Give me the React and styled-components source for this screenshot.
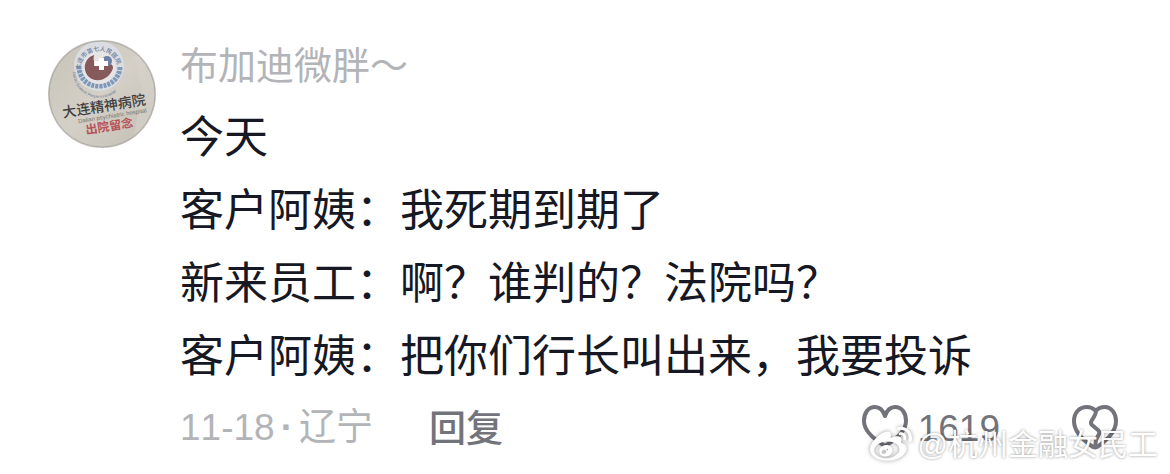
import { createGlobalStyle, styled } from "styled-components";
import { FaWeibo } from "react-icons/fa";

const GlobalStyle = createGlobalStyle`
  body {
    margin: 0;
    background-color: #fff;
    font-family: "Noto Sans CJK SC", sans-serif;
  }
`;
const Wrap = styled.main`
  position: relative;
  box-sizing: border-box;
  padding: 40px 52px 20px 48px;
  overflow: hidden;
`;
const Comment = styled.article`
  display: flex;
  align-items: flex-start;
  gap: 24px;
`;
const Avatar = styled.svg`
  width: 108px;
  height: 108px;
  flex-shrink: 0;
`;
const Content = styled.div`
  flex: 1;
  min-width: 0;
`;
const UserName = styled.a`
  display: block;
  width: fit-content;
  font-size: 38px;
  font-weight: 400;
  line-height: 46px;
  margin-bottom: 12px;
  color: #b3b4b8;
  text-decoration: none;
`;
const Message = styled.p`
  margin: 0;
  font-size: 44px;
  font-weight: 400;
  line-height: 73px;
  color: #161823;
`;
const Footer = styled.footer`
  display: flex;
  align-items: center;
  height: 56px;
  margin-top: 8px;
  font-size: 37px;
  line-height: 56px;
`;
const Meta = styled.div`
  display: flex;
  align-items: baseline;
  gap: 6px;
  color: #b3b4b8;
`;
const Latin = styled.span`
  font-family: "Liberation Sans", sans-serif;
  font-weight: ${(props) => (props.$bold ? 700 : 400)};
  font-kerning: none;
`;
const ReplyButton = styled.button`
  margin-left: 56px;
  padding: 0;
  border: 0;
  background: none;
  font-family: inherit;
  font-size: 37px;
  font-weight: 500;
  line-height: 56px;
  color: #73747b;
`;
const Actions = styled.div`
  display: flex;
  align-items: center;
  gap: 72px;
  margin-left: auto;
`;
const IconButton = styled.button`
  display: flex;
  align-items: center;
  gap: 10px;
  padding: 2px 0 0;
  border: 0;
  background: none;
  font-size: 37px;
  line-height: 48px;
  color: #73747b;

  svg {
    width: 46px;
    height: 46px;
    fill: none;
    stroke: #73747b;
    stroke-width: 4;
    stroke-linejoin: round;
    stroke-linecap: round;
  }
  span {
    padding-top: 4px;
  }
`;
const Watermark = styled.div`
  position: absolute;
  right: 12px;
  bottom: 8px;
  display: flex;
  align-items: center;
  gap: 6px;
  font-family: "Liberation Sans", "Noto Sans CJK SC", sans-serif;
  font-size: 30px;
  line-height: 40px;
  color: #fff;
  text-shadow: 0 0 3px rgba(0, 0, 0, 0.45);

  svg {
    width: 42px;
    height: 42px;
    filter: drop-shadow(0 0 2px rgba(0, 0, 0, 0.4));
  }
`;

const lines = [
  "今天",
  "客户阿姨：我死期到期了",
  "新来员工：啊？谁判的？法院吗？",
  "客户阿姨：把你们行长叫出来，我要投诉",
];

const AvatarImage = () => (
  <Avatar viewBox="0 0 108 108" role="img" aria-label="布加迪微胖">
    <defs>
      <clipPath id="avatarClip">
        <circle cx="54" cy="54" r="54" />
      </clipPath>
      <linearGradient id="paper" x1="0" y1="0" x2="1" y2="1">
        <stop offset="0" stopColor="#c7c2b7" />
        <stop offset="0.5" stopColor="#d4d0c7" />
        <stop offset="1" stopColor="#c4bfb5" />
      </linearGradient>
      <path id="sealTop" d="M32 30A19 19 0 0 1 70 30" />
      <path id="sealBottom" d="M25 32A26 26 0 0 0 77 32" />
    </defs>
    <g clipPath="url(#avatarClip)">
      <rect width="108" height="108" fill="url(#paper)" />
      <path d="M82 0L94 50L84 108H108V0Z" fill="#d8d4cc" opacity="0.5" />
      <circle cx="51" cy="26" r="25" fill="#d9dce0" />
      <path
        d="M31 26C31 38 39 46 51 46C63 46 72 38 72 26"
        fill="none"
        stroke="#7f98ba"
        strokeWidth="5"
        strokeDasharray="3 1"
      />
      <circle cx="51" cy="27" r="17" fill="#e6e4e4" />
      <path
        d="M46 15C36 18 34 30 41 37C49 44 62 39 65 28C65 24 62 23 60 26H56V30H51V26H46V21C45 19 46 17 46 15Z"
        fill="#86595b"
      />
      <circle cx="59" cy="21" r="5" fill="#6c7fa6" />
      <path d="M51 18H56V21H60V26H56V30H51V26H47V21H51Z" fill="#fff" />
      <text fontSize="6" fill="#6b7f9f" fontWeight="500">
        <textPath href="#sealTop">大连市第七人民医院</textPath>
      </text>
      <text fontSize="4" fill="#6b7b96" fontFamily="Liberation Sans">
        <textPath href="#sealBottom">Dalian Seventh People's Hospital</textPath>
      </text>
      <g transform="rotate(-9 56 66)">
        <text x="14" y="71" fontSize="14" fontWeight="500" fill="#3f3e40">
          大连精神病院
        </text>
        <text
          x="28"
          y="79"
          fontSize="6"
          fill="#73736f"
          fontFamily="Liberation Sans"
        >
          Dalian psychiatric hospital
        </text>
        <text x="34" y="91" fontSize="12" fontWeight="700" fill="#b9525a">
          出院留念
        </text>
      </g>
      <circle
        cx="54"
        cy="54"
        r="53"
        fill="none"
        stroke="#aaa"
        strokeWidth="1"
      />
    </g>
  </Avatar>
);

const App = () => {
  return (
    <>
      <GlobalStyle />
      <Wrap>
        <Comment>
          <AvatarImage />
          <Content>
            <UserName href="#">布加迪微胖～</UserName>
            {lines.map((line) => (
              <Message key={line}>{line}</Message>
            ))}
            <Footer>
              <Meta>
                <Latin>11-18</Latin>
                <Latin $bold>·</Latin>
                <span>辽宁</span>
              </Meta>
              <ReplyButton type="button">回复</ReplyButton>
              <Actions>
                <IconButton type="button" aria-label="点赞 1619">
                  <svg viewBox="0 0 46 46">
                    <path d="M23 12C21 6 17 3 13 3C6 3 2 9 2 17C2 27 13 36 23 42C33 36 44 27 44 17C44 9 40 3 33 3C29 3 25 6 23 12Z" />
                  </svg>
                  <Latin>1619</Latin>
                </IconButton>
                <IconButton type="button" aria-label="不喜欢">
                  <svg viewBox="0 0 46 46">
                    <path d="M24 7C21 4 18 3 15 3C7 3 2 9 2 17C2 28 12 37 21 43Q23 44 25 43C34 37 44 28 44 17C44 9 39 3 33 3C29 3 26 4 24 7Q24 10 20 16Q18 19 20 21L26 26Q28 28 27 30L24 36L23 43" />
                  </svg>
                </IconButton>
              </Actions>
            </Footer>
          </Content>
        </Comment>
        <Watermark>
          <FaWeibo />
          <span>@杭州金融女民工</span>
        </Watermark>
      </Wrap>
    </>
  );
};

export default App;
